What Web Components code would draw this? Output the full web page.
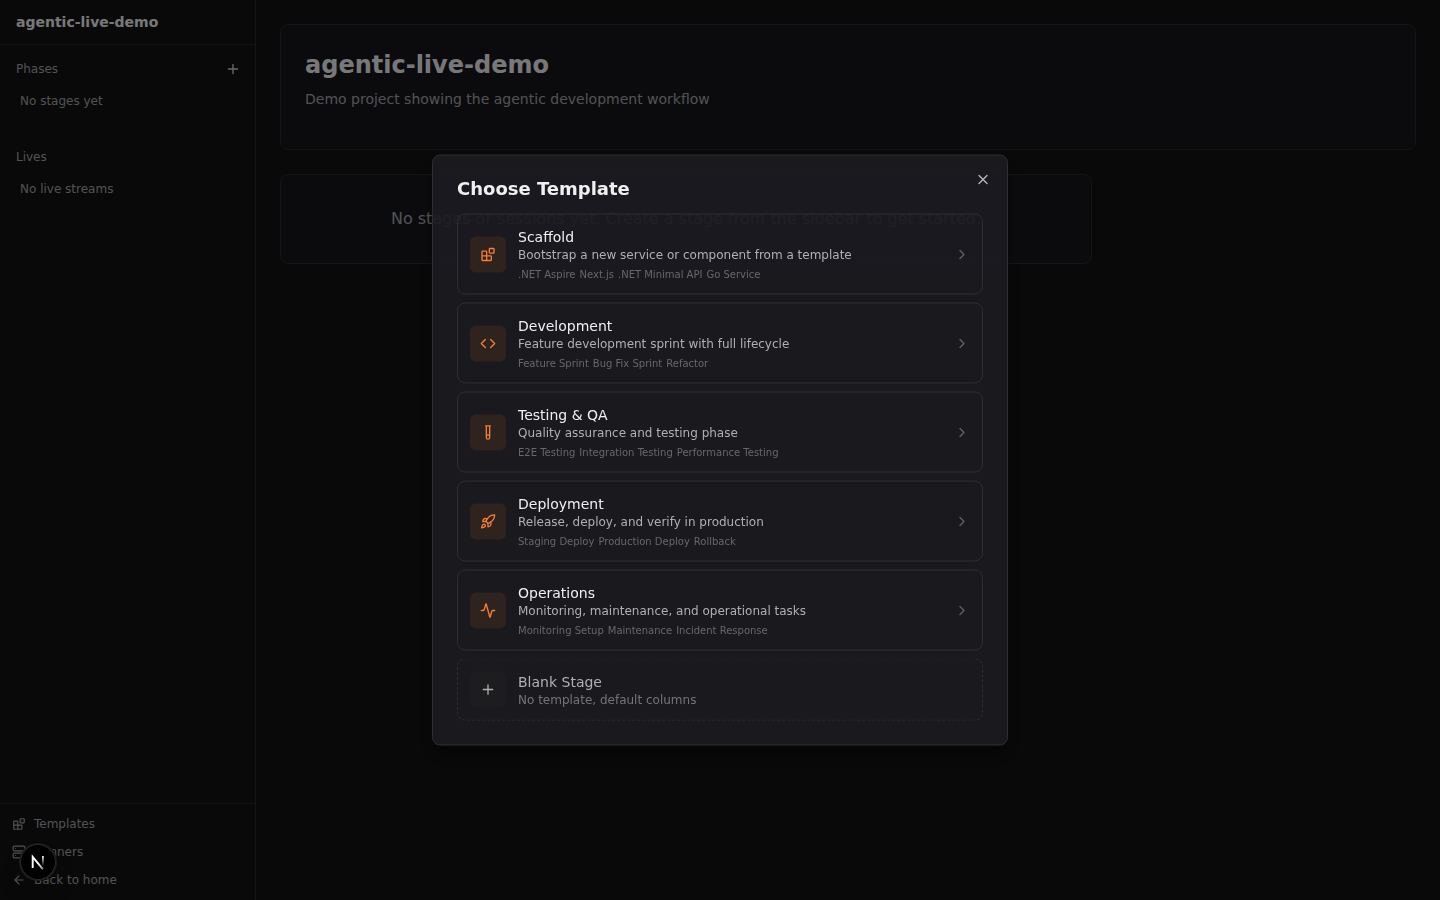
<!DOCTYPE html>
<html lang="en">
<head>
<meta charset="UTF-8">
<meta name="viewport" content="width=device-width, initial-scale=1.0">
<title>agentic-live-demo</title>
<style>
  :root {
    --bg: #121213;
    --card: #17171c;
    --line: #29292c;
    --text: #f0f0f0;
    --muted: #a5a5a9;
    --accent: #f87f32;
  }

  body {
    margin: 0;
    background: var(--bg);
    color: var(--text);
    font-family: "DejaVu Sans", sans-serif;
    font-size: 14px;
    line-height: 20px;
  }
</style>
</head>
<body>
<app-shell>
  <side-bar slot="sidebar" name="agentic-live-demo">
    <side-section label="Phases" addable>No stages yet</side-section>
    <side-section label="Lives">No live streams</side-section>
    <side-link slot="footer" icon="blocks">Templates</side-link>
    <side-link slot="footer" icon="server">Runners</side-link>
    <side-link slot="footer" icon="arrow-left">Back to home</side-link>
  </side-bar>
  <project-header name="agentic-live-demo">Demo project showing the agentic development workflow</project-header>
  <empty-state>No stages or sessions yet. Create a stage from the sidebar to get started.</empty-state>
</app-shell>

<template-dialog label="Choose Template">
  <template-card icon="blocks" name="Scaffold" text="Bootstrap a new service or component from a template" tags=".NET Aspire|Next.js|.NET Minimal API|Go Service"></template-card>
  <template-card icon="code" name="Development" text="Feature development sprint with full lifecycle" tags="Feature Sprint|Bug Fix Sprint|Refactor"></template-card>
  <template-card icon="tube" name="Testing &amp; QA" text="Quality assurance and testing phase" tags="E2E Testing|Integration Testing|Performance Testing"></template-card>
  <template-card icon="rocket" name="Deployment" text="Release, deploy, and verify in production" tags="Staging Deploy|Production Deploy|Rollback"></template-card>
  <template-card icon="activity" name="Operations" text="Monitoring, maintenance, and operational tasks" tags="Monitoring Setup|Maintenance|Incident Response"></template-card>
  <template-card blank icon="plus" name="Blank Stage" text="No template, default columns"></template-card>
</template-dialog>

<dev-badge></dev-badge>

<script>
const icons = {
  "blocks": '<rect width="7" height="7" x="14" y="3" rx="1"/><path d="M10 21V8a1 1 0 0 0-1-1H4a1 1 0 0 0-1 1v12a1 1 0 0 0 1 1h12a1 1 0 0 0 1-1v-5a1 1 0 0 0-1-1H3"/>',
  "code": '<path d="m16 18 6-6-6-6M8 6l-6 6 6 6"/>',
  "tube": '<path d="M14.5 2v17.5c0 1.4-1.1 2.5-2.5 2.5s-2.5-1.1-2.5-2.5V2M8.5 2h7M14.5 16h-5"/>',
  "rocket": '<path d="M4.5 16.5c-1.5 1.26-2 5-2 5s3.74-.5 5-2c.71-.84.7-2.13-.09-2.91a2.18 2.18 0 0 0-2.91-.09z"/><path d="m12 15-3-3a22 22 0 0 1 2-3.95A12.88 12.88 0 0 1 22 2c0 2.72-.78 7.5-6 11a22.35 22.35 0 0 1-4 2z"/><path d="M9 12H4s.55-3.03 2-4c1.62-1.08 5 0 5 0M12 15v5s3.03-.55 4-2c1.08-1.62 0-5 0-5"/>',
  "activity": '<path d="M22 12h-2.48a2 2 0 0 0-1.93 1.46l-2.35 8.36a.25.25 0 0 1-.48 0L9.24 2.18a.25.25 0 0 0-.48 0l-2.35 8.36A2 2 0 0 1 4.49 12H2"/>',
  "plus": '<path d="M5 12h14M12 5v14"/>',
  "close": '<path d="M18 6 6 18M6 6l12 12"/>',
  "chevron": '<path d="m9 18 6-6-6-6"/>',
  "server": '<rect width="20" height="8" x="2" y="2" rx="2"/><rect width="20" height="8" x="2" y="14" rx="2"/><path d="M6 6h.01M6 18h.01"/>',
  "arrow-left": '<path d="m12 19-7-7 7-7M19 12H5"/>',
};

class UiIcon extends HTMLElement {
  connectedCallback() {
    this.attachShadow({ mode: "open" }).innerHTML = `
      <style>
        :host { display: block; flex: none; width: var(--icon-size, 16px); height: var(--icon-size, 16px); }
        svg { display: block; width: 100%; height: 100%; }
      </style>
      <svg viewBox="0 0 24 24" fill="none" stroke="currentColor" stroke-width="2"
        stroke-linecap="round" stroke-linejoin="round" aria-hidden="true">${icons[this.getAttribute("name")]}</svg>
    `;
  }
}

class AppShell extends HTMLElement {
  connectedCallback() {
    this.attachShadow({ mode: "open" }).innerHTML = `
      <style>
        :host { display: flex; min-height: 100vh; }
        main {
          flex: 1;
          min-width: 0;
          display: flex;
          flex-direction: column;
          gap: 24px;
          padding: 24px;
        }
      </style>
      <slot name="sidebar"></slot>
      <main><slot></slot></main>
    `;
  }
}

class SideBar extends HTMLElement {
  connectedCallback() {
    this.attachShadow({ mode: "open" }).innerHTML = `
      <style>
        :host {
          display: flex;
          flex-direction: column;
          flex: none;
          box-sizing: border-box;
          width: 256px;
          border-right: 1px solid var(--line);
        }
        header { padding: 12px 16px; border-bottom: 1px solid var(--line); font-weight: bold; }
        .sections { flex: 1; display: flex; flex-direction: column; gap: 24px; padding: 12px 14px 12px 16px; }
        nav {
          display: flex;
          flex-direction: column;
          gap: 4px;
          padding: 8px;
          border-top: 1px solid var(--line);
        }
      </style>
      <header>${this.getAttribute("name")}</header>
      <div class="sections"><slot></slot></div>
      <nav><slot name="footer"></slot></nav>
    `;
  }
}

class SideSection extends HTMLElement {
  connectedCallback() {
    const add = this.hasAttribute("addable")
      ? '<button type="button" aria-label="Add stage"><ui-icon name="plus"></ui-icon></button>'
      : "";

    this.attachShadow({ mode: "open" }).innerHTML = `
      <style>
        :host { display: block; font-size: 12px; line-height: 16px; color: var(--muted); }
        .head { display: flex; align-items: center; justify-content: space-between; height: 24px; }
        h2 { margin: 0; font: inherit; }
        button { padding: 0; border: 0; background: none; color: #d0d0d3; }
        p { margin: 0; padding: 12px 4px; }
      </style>
      <div class="head"><h2>${this.getAttribute("label")}</h2>${add}</div>
      <p><slot></slot></p>
    `;
  }
}

class SideLink extends HTMLElement {
  connectedCallback() {
    this.attachShadow({ mode: "open" }).innerHTML = `
      <style>
        :host { display: block; }
        a {
          display: flex;
          align-items: center;
          gap: 8px;
          padding: 4px;
          color: var(--muted);
          font-size: 12px;
          line-height: 16px;
          text-decoration: none;
          --icon-size: 14px;
        }
      </style>
      <a href="#"><ui-icon name="${this.getAttribute("icon")}"></ui-icon><slot></slot></a>
    `;
  }
}

class ProjectHeader extends HTMLElement {
  connectedCallback() {
    this.attachShadow({ mode: "open" }).innerHTML = `
      <style>
        :host {
          display: block;
          padding: 24px 24px 40px;
          border: 1px solid var(--line);
          border-radius: 8px;
          background: var(--card);
        }
        h1 { margin: 0 0 8px; font-size: 24px; line-height: 32px; }
        p { margin: 0; color: var(--muted); }
      </style>
      <h1>${this.getAttribute("name")}</h1>
      <p><slot></slot></p>
    `;
  }
}

class EmptyState extends HTMLElement {
  connectedCallback() {
    this.attachShadow({ mode: "open" }).innerHTML = `
      <style>
        :host { display: grid; grid-template-columns: 1fr 300px; gap: 24px; }
        p {
          margin: 0;
          padding: 32px;
          border: 1px solid var(--line);
          border-radius: 8px;
          background: var(--card);
          color: var(--muted);
          font-size: 16px;
          line-height: 24px;
          text-align: center;
        }
      </style>
      <p><slot></slot></p>
    `;
  }
}

class TemplateDialog extends HTMLElement {
  connectedCallback() {
    this.attachShadow({ mode: "open" }).innerHTML = `
      <style>
        :host { display: block; position: fixed; inset: 0; background: rgba(0, 0, 0, 0.5); }
        section {
          position: absolute;
          top: 50%;
          left: 50%;
          transform: translate(-50%, -50%);
          box-sizing: border-box;
          display: grid;
          gap: 16px;
          width: calc(100% - 32px);
          max-width: 576px;
          padding: 24px;
          border: 1px solid #2e2e31;
          border-radius: 8px;
          background: rgba(28, 27, 33, 0.92);
          box-shadow: 0 10px 15px -3px rgba(0, 0, 0, 0.4);
        }
        h2 { margin: 0; font-size: 18px; line-height: 18px; }
        .list { display: grid; gap: 8px; }
        button {
          position: absolute;
          top: 16px;
          right: 16px;
          padding: 0;
          border: 0;
          background: none;
          color: #b9b9bb;
        }
      </style>
      <section role="dialog" aria-modal="true" aria-labelledby="title">
        <h2 id="title">${this.getAttribute("label")}</h2>
        <div class="list"><slot></slot></div>
        <button type="button" aria-label="Close"><ui-icon name="close"></ui-icon></button>
      </section>
    `;
  }
}

class TemplateCard extends HTMLElement {
  connectedCallback() {
    const tags = this.getAttribute("tags");
    const list = tags
      ? `<span class="tags">${tags.split("|").map((tag) => `<span>${tag}</span>`).join("")}</span>`
      : "";
    const arrow = this.hasAttribute("blank") ? "" : '<ui-icon class="arrow" name="chevron"></ui-icon>';

    this.attachShadow({ mode: "open" }).innerHTML = `
      <style>
        :host { display: block; }
        button {
          display: flex;
          align-items: center;
          gap: 12px;
          width: 100%;
          padding: 12px;
          border: 1px solid #2e2e31;
          border-radius: 8px;
          background: none;
          color: var(--text);
          font: inherit;
          text-align: left;
        }
        .icon {
          flex: none;
          display: grid;
          place-items: center;
          width: 36px;
          height: 36px;
          border-radius: 6px;
          background: rgba(235, 130, 50, 0.1);
          color: var(--accent);
        }
        .body { flex: 1; min-width: 0; display: flex; flex-direction: column; }
        .text { color: #b0b0b3; font-size: 12px; line-height: 16px; }
        .tags {
          display: flex;
          flex-wrap: wrap;
          gap: 4px;
          margin-top: 4px;
          color: #68686c;
          font-size: 10px;
          line-height: 15px;
        }
        .arrow { color: #606064; }
        :host([blank]) button { border-style: dashed; color: #b0b0b3; }
        :host([blank]) .icon { background: #1d1d20; color: #b0b0b3; }
        :host([blank]) .text { color: #74747a; }
      </style>
      <button type="button">
        <span class="icon"><ui-icon name="${this.getAttribute("icon")}"></ui-icon></span>
        <span class="body">
          <span>${this.getAttribute("name")}</span>
          <span class="text">${this.getAttribute("text")}</span>
          ${list}
        </span>
        ${arrow}
      </button>
    `;
  }
}

class DevBadge extends HTMLElement {
  connectedCallback() {
    this.attachShadow({ mode: "open" }).innerHTML = `
      <style>
        :host { display: block; position: fixed; left: 20px; bottom: 20px; }
        button {
          display: grid;
          place-items: center;
          width: 36px;
          height: 36px;
          padding: 0;
          border: 0;
          border-radius: 50%;
          background: #000;
          box-shadow: 0 0 0 1px #1d1d1d, inset 0 0 0 1px #2a2a2a, 0 16px 32px -8px rgba(0, 0, 0, 0.24);
        }
        svg { display: block; width: 36px; height: 36px; }
      </style>
      <button type="button" aria-label="Open dev tools">
        <svg viewBox="0 0 36 36" fill="none" aria-hidden="true">
          <defs>
            <linearGradient id="diag" x1="19" y1="19" x2="24" y2="25" gradientUnits="userSpaceOnUse">
              <stop stop-color="#fff"/><stop offset="1" stop-color="#fff" stop-opacity="0.5"/>
            </linearGradient>
            <linearGradient id="stem" x1="23" y1="12" x2="23" y2="22" gradientUnits="userSpaceOnUse">
              <stop stop-color="#fff"/><stop offset="1" stop-color="#fff" stop-opacity="0"/>
            </linearGradient>
          </defs>
          <path d="M12.7 24V13L22.8 25.2" stroke="url(#diag)" stroke-width="1.9"/>
          <path d="M22.9 12v10" stroke="url(#stem)" stroke-width="1.7"/>
        </svg>
      </button>
    `;
  }
}

customElements.define("ui-icon", UiIcon);
customElements.define("app-shell", AppShell);
customElements.define("side-bar", SideBar);
customElements.define("side-section", SideSection);
customElements.define("side-link", SideLink);
customElements.define("project-header", ProjectHeader);
customElements.define("empty-state", EmptyState);
customElements.define("template-dialog", TemplateDialog);
customElements.define("template-card", TemplateCard);
customElements.define("dev-badge", DevBadge);
</script>
</body>
</html>
